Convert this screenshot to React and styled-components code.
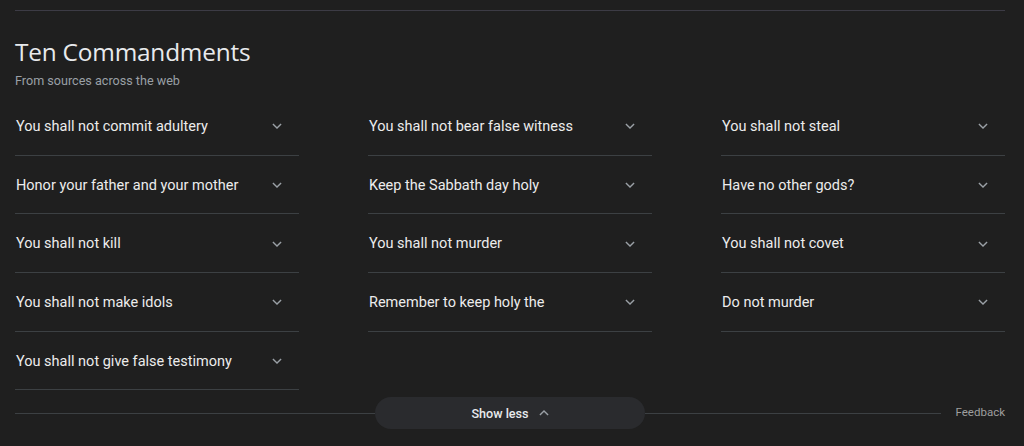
import React from "react";
import styled, { createGlobalStyle } from "styled-components";

const Global = createGlobalStyle`
  html, body { margin: 0; padding: 0; background: #1f1f1f; }
  body { font-family: Roboto, "Liberation Sans", Arial, sans-serif; -webkit-font-smoothing: antialiased; }
`;

const Page = styled.div`
  width: 1024px;
  height: 446px;
  box-sizing: border-box;
  padding: 10px 19px 0 15px;
  background: #1f1f1f;
  overflow: hidden;
`;

const TopRule = styled.div`
  height: 1px;
  background: #3c3b45;
`;

const Title = styled.h2`
  margin: 26px 0 0 0;
  font-family: "Open Sans", Roboto, sans-serif;
  font-weight: 400;
  font-size: 24.4px;
  line-height: 30px;
  color: #e8eaed;
  letter-spacing: -0.2px;
`;

const Subtitle = styled.div`
  margin-top: 6px;
  font-size: 12.6px;
  line-height: 16px;
  color: #9aa0a6;
`;

const Grid = styled.div`
  display: grid;
  grid-template-columns: repeat(3, 284px);
  column-gap: 69px;
  margin-top: 8px;
  align-items: start;
`;

const Column = styled.div`
  display: flex;
  flex-direction: column;
`;

const Row = styled.div`
  display: flex;
  align-items: center;
  justify-content: space-between;
  box-sizing: border-box;
  height: 58.7px;
  padding: 1px 15px 0 1px;
  border-bottom: 1px solid #3c4043;
`;

const Label = styled.span`
  font-size: 14.5px;
  color: #ececec;
  font-weight: 400;
`;

const Chevron = ({ up }) => (
  <svg width="14" height="14" viewBox="0 0 24 24" style={{ transform: up ? "rotate(180deg)" : "none" }}>
    <path d="M5 8.5l7 7 7-7" fill="none" stroke="#9aa0a6" strokeWidth="2.4" />
  </svg>
);

const Footer = styled.div`
  display: flex;
  align-items: center;
  margin-top: 7px;
  height: 32px;
`;

const FooterRule = styled.div`
  flex: ${(p) => (p.$w ? "none" : "1")};
  width: ${(p) => (p.$w ? `${p.$w}px` : "auto")};
  height: 1px;
  background: #3c4043;
`;

const ShowLess = styled.button`
  display: flex;
  align-items: center;
  justify-content: center;
  gap: 8px;
  width: 270px;
  height: 32px;
  border: none;
  border-radius: 16px;
  background: #2a2b2e;
  color: #e8eaed;
  font-family: Roboto, sans-serif;
  font-size: 12.6px;
  font-weight: 500;
  flex-shrink: 0;
  padding: 0 0 0 2px;
`;

const Feedback = styled.span`
  margin-left: 15px;
  margin-bottom: 3px;
  font-size: 11.5px;
  color: #9e9e9e;
`;

const cols = [
  [
    "You shall not commit adultery",
    "Honor your father and your mother",
    "You shall not kill",
    "You shall not make idols",
    "You shall not give false testimony",
  ],
  [
    "You shall not bear false witness",
    "Keep the Sabbath day holy",
    "You shall not murder",
    "Remember to keep holy the",
  ],
  [
    "You shall not steal",
    "Have no other gods?",
    "You shall not covet",
    "Do not murder",
  ],
];

export default function App() {
  return (
    <>
      <Global />
      <Page>
        <TopRule />
        <Title>Ten Commandments</Title>
        <Subtitle>From sources across the web</Subtitle>
        <Grid>
          {cols.map((c, i) => (
            <Column key={i}>
              {c.map((t) => (
                <Row key={t}>
                  <Label>{t}</Label>
                  <Chevron />
                </Row>
              ))}
            </Column>
          ))}
        </Grid>
        <Footer>
          <FooterRule $w={360} />
          <ShowLess>
            Show less <Chevron up />
          </ShowLess>
          <FooterRule />
          <Feedback>Feedback</Feedback>
        </Footer>
      </Page>
    </>
  );
}
